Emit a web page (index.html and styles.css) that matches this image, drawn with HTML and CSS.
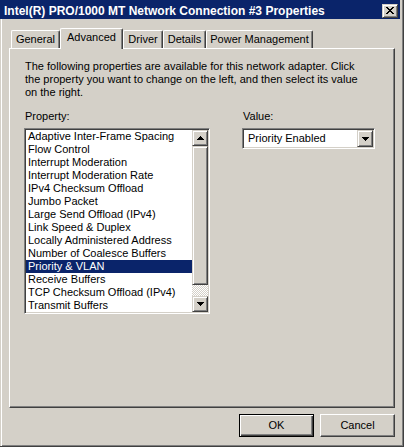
FILE: index.html
```html
<!DOCTYPE html>
<html>
<head>
<meta charset="utf-8">
<link rel="stylesheet" href="styles.css">
</head>
<body>
<div class="window">
  <div class="titlebar">
    <span class="title">Intel(R) PRO/1000 MT Network Connection #3 Properties</span>
    <div class="close">
      <svg width="8" height="7" viewBox="0 0 8 7" shape-rendering="crispEdges">
        <rect x="0" y="0" width="2" height="1"/><rect x="6" y="0" width="2" height="1"/>
        <rect x="1" y="1" width="2" height="1"/><rect x="5" y="1" width="2" height="1"/>
        <rect x="2" y="2" width="4" height="1"/>
        <rect x="3" y="3" width="2" height="1"/>
        <rect x="2" y="4" width="4" height="1"/>
        <rect x="1" y="5" width="2" height="1"/><rect x="5" y="5" width="2" height="1"/>
        <rect x="0" y="6" width="2" height="1"/><rect x="6" y="6" width="2" height="1"/>
      </svg>
    </div>
  </div>
  <div class="body">
    <div class="tabs">
      <div class="tab tab-general">General</div>
      <div class="tab tab-advanced selected">Advanced</div>
      <div class="tab tab-driver">Driver</div>
      <div class="tab tab-details">Details</div>
      <div class="tab tab-power">Power Management</div>
    </div>
    <div class="panel">
      <p class="intro">The following properties are available for this network adapter. Click<br>the property you want to change on the left, and then select its value<br>on the right.</p>
      <div class="columns">
        <div class="col-left">
          <div class="label">Property:</div>
          <div class="listbox">
            <ul class="items">
              <li>Adaptive Inter-Frame Spacing</li>
              <li>Flow Control</li>
              <li>Interrupt Moderation</li>
              <li>Interrupt Moderation Rate</li>
              <li>IPv4 Checksum Offload</li>
              <li>Jumbo Packet</li>
              <li>Large Send Offload (IPv4)</li>
              <li>Link Speed &amp; Duplex</li>
              <li>Locally Administered Address</li>
              <li>Number of Coalesce Buffers</li>
              <li class="sel">Priority &amp; VLAN</li>
              <li>Receive Buffers</li>
              <li>TCP Checksum Offload (IPv4)</li>
              <li>Transmit Buffers</li>
            </ul>
            <div class="scrollbar">
              <div class="sb-btn">
                <svg width="7" height="4" viewBox="0 0 7 4" shape-rendering="crispEdges">
                  <rect x="3" y="0" width="1" height="1"/><rect x="2" y="1" width="3" height="1"/>
                  <rect x="1" y="2" width="5" height="1"/><rect x="0" y="3" width="7" height="1"/>
                </svg>
              </div>
              <div class="thumb"></div>
              <div class="track"></div>
              <div class="sb-btn">
                <svg width="7" height="4" viewBox="0 0 7 4" shape-rendering="crispEdges">
                  <rect x="0" y="0" width="7" height="1"/><rect x="1" y="1" width="5" height="1"/>
                  <rect x="2" y="2" width="3" height="1"/><rect x="3" y="3" width="1" height="1"/>
                </svg>
              </div>
            </div>
          </div>
        </div>
        <div class="col-right">
          <div class="label">Value:</div>
          <div class="combo">
            <span class="combo-text">Priority Enabled</span>
            <div class="combo-btn">
              <svg width="7" height="4" viewBox="0 0 7 4" shape-rendering="crispEdges">
                <rect x="0" y="0" width="7" height="1"/><rect x="1" y="1" width="5" height="1"/>
                <rect x="2" y="2" width="3" height="1"/><rect x="3" y="3" width="1" height="1"/>
              </svg>
            </div>
          </div>
        </div>
      </div>
    </div>
    <div class="buttons">
      <div class="btn btn-default"><span>OK</span></div>
      <div class="btn"><span>Cancel</span></div>
    </div>
  </div>
</div>
</body>
</html>
```
FILE: styles.css
```css
* { box-sizing: border-box; }
html, body { margin: 0; padding: 0; }
body {
  width: 404px;
  height: 447px;
  overflow: hidden;
  background: #d4d0c8;
  font-family: "Liberation Sans", Arial, sans-serif;
  font-size: 11px;
  line-height: 13px;
  color: #000;
}
.window {
  width: 404px;
  height: 447px;
  display: flex;
  flex-direction: column;
  background: #d4d0c8;
  border-right: 1px solid #404040;
  border-bottom: 1px solid #404040;
  box-shadow: inset -1px -1px 0 #808080;
}
.titlebar {
  height: 19px;
  margin-right: 3px;
  background: #0a246a;
  display: flex;
  align-items: flex-start;
  justify-content: space-between;
  padding: 0 2px 0 4px;
}
.title {
  color: #fff;
  font-weight: bold;
  font-size: 12px;
  line-height: 14px;
  padding-top: 4px;
  white-space: nowrap;
}
.close {
  width: 16px;
  height: 14px;
  margin-top: 4px;
  background: #d4d0c8;
  border-top: 1px solid #d4d0c8;
  border-left: 1px solid #d4d0c8;
  border-right: 1px solid #404040;
  border-bottom: 1px solid #404040;
  box-shadow: inset 1px 1px 0 #fff, inset -1px -1px 0 #808080;
  padding: 2px 0 0 3px;
  display: flex;
  align-items: flex-start;
}
.close svg, .sb-btn svg, .combo-btn svg { display: block; fill: #000; }
.body {
  flex: 1;
  display: flex;
  flex-direction: column;
  border-left: 1px solid #d4d0c8;
  box-shadow: inset 1px 0 0 #fff;
  padding: 9px 8px 0 8px;
}
.tabs {
  display: flex;
  align-items: flex-end;
  height: 21px;
  margin-bottom: -1px;
  padding-left: 2px;
  position: relative;
  z-index: 1;
}
.tab {
  height: 18px;
  margin-bottom: 1px;
  padding-top: 2px;
  text-align: center;
  white-space: nowrap;
  border-top: 1px solid #fff;
  border-left: 1px solid #fff;
  border-right: 1px solid #404040;
  box-shadow: inset -1px 0 0 #808080;
  border-top-left-radius: 2px;
  border-top-right-radius: 2px;
  background: #d4d0c8;
}
.tab.selected {
  height: 21px;
  margin-bottom: 0;
}
.tab-general { width: 49px; }
.tab-advanced { width: 63px; }
.tab-driver { width: 40px; }
.tab-details { width: 43px; }
.tab-power { width: 107px; }
.panel {
  height: 360px;
  border-top: 1px solid #fff;
  border-left: 1px solid #fff;
  border-right: 1px solid #404040;
  border-bottom: 1px solid #404040;
  box-shadow: inset -1px -1px 0 #808080;
  padding: 11px 14px 0 14px;
}
.intro {
  margin: 0;
  padding-left: 1px;
  white-space: nowrap;
}
.columns {
  display: flex;
  gap: 32px;
  margin-top: 11px;
}
.label { padding-left: 1px; height: 13px; }
.col-left { width: 186px; }
.listbox {
  margin-top: 5px;
  height: 186px;
  display: flex;
  border-top: 1px solid #808080;
  border-left: 1px solid #808080;
  border-right: 1px solid #fff;
  border-bottom: 1px solid #fff;
  box-shadow: inset 1px 1px 0 #404040, inset -1px -1px 0 #d4d0c8;
  padding: 1px;
  background: #fff;
}
.items {
  list-style: none;
  margin: 0;
  padding: 0;
  flex: 1;
  background: #fff;
}
.items li {
  height: 13px;
  padding-left: 2px;
  white-space: nowrap;
}
.items li.sel {
  background: #0a246a;
  color: #fff;
}
.scrollbar {
  width: 16px;
  display: flex;
  flex-direction: column;
}
.sb-btn {
  height: 16px;
  flex: none;
  background: #d4d0c8;
  border-top: 1px solid #d4d0c8;
  border-left: 1px solid #d4d0c8;
  border-right: 1px solid #404040;
  border-bottom: 1px solid #404040;
  box-shadow: inset 1px 1px 0 #fff, inset -1px -1px 0 #808080;
  display: flex;
  align-items: center;
  justify-content: center;
}
.thumb {
  height: 139px;
  flex: none;
  background: #d4d0c8;
  border-top: 1px solid #d4d0c8;
  border-left: 1px solid #d4d0c8;
  border-right: 1px solid #404040;
  border-bottom: 1px solid #404040;
  box-shadow: inset 1px 1px 0 #fff, inset -1px -1px 0 #808080;
}
.track {
  flex: 1;
  background: repeating-conic-gradient(#fff 0 25%, #d4d0c8 0 50%) 0 0 / 2px 2px;
}
.col-right { padding-left: 0; }
.combo {
  margin-top: 5px;
  width: 133px;
  height: 21px;
  display: flex;
  align-items: stretch;
  border-top: 1px solid #808080;
  border-left: 1px solid #808080;
  border-right: 1px solid #fff;
  border-bottom: 1px solid #fff;
  box-shadow: inset 1px 1px 0 #404040, inset -1px -1px 0 #d4d0c8;
  padding: 1px;
  background: #fff;
}
.combo-text {
  flex: 1;
  padding: 2px 0 0 4px;
  white-space: nowrap;
}
.combo-btn {
  width: 16px;
  height: 17px;
  background: #d4d0c8;
  border-top: 1px solid #d4d0c8;
  border-left: 1px solid #d4d0c8;
  border-right: 1px solid #404040;
  border-bottom: 1px solid #404040;
  box-shadow: inset 1px 1px 0 #fff, inset -1px -1px 0 #808080;
  display: flex;
  align-items: center;
  justify-content: center;
}
.buttons {
  display: flex;
  justify-content: flex-end;
  gap: 6px;
  margin-top: 6px;
}
.btn {
  width: 75px;
  height: 23px;
  display: flex;
  align-items: center;
  justify-content: center;
  background: #d4d0c8;
  border-top: 1px solid #fff;
  border-left: 1px solid #fff;
  border-right: 1px solid #404040;
  border-bottom: 1px solid #404040;
  box-shadow: inset -1px -1px 0 #808080;
}
.btn-default {
  border: 1px solid #000;
  box-shadow: inset 1px 1px 0 #fff, inset -1px -1px 0 #404040, inset -2px -2px 0 #808080;
}
```
